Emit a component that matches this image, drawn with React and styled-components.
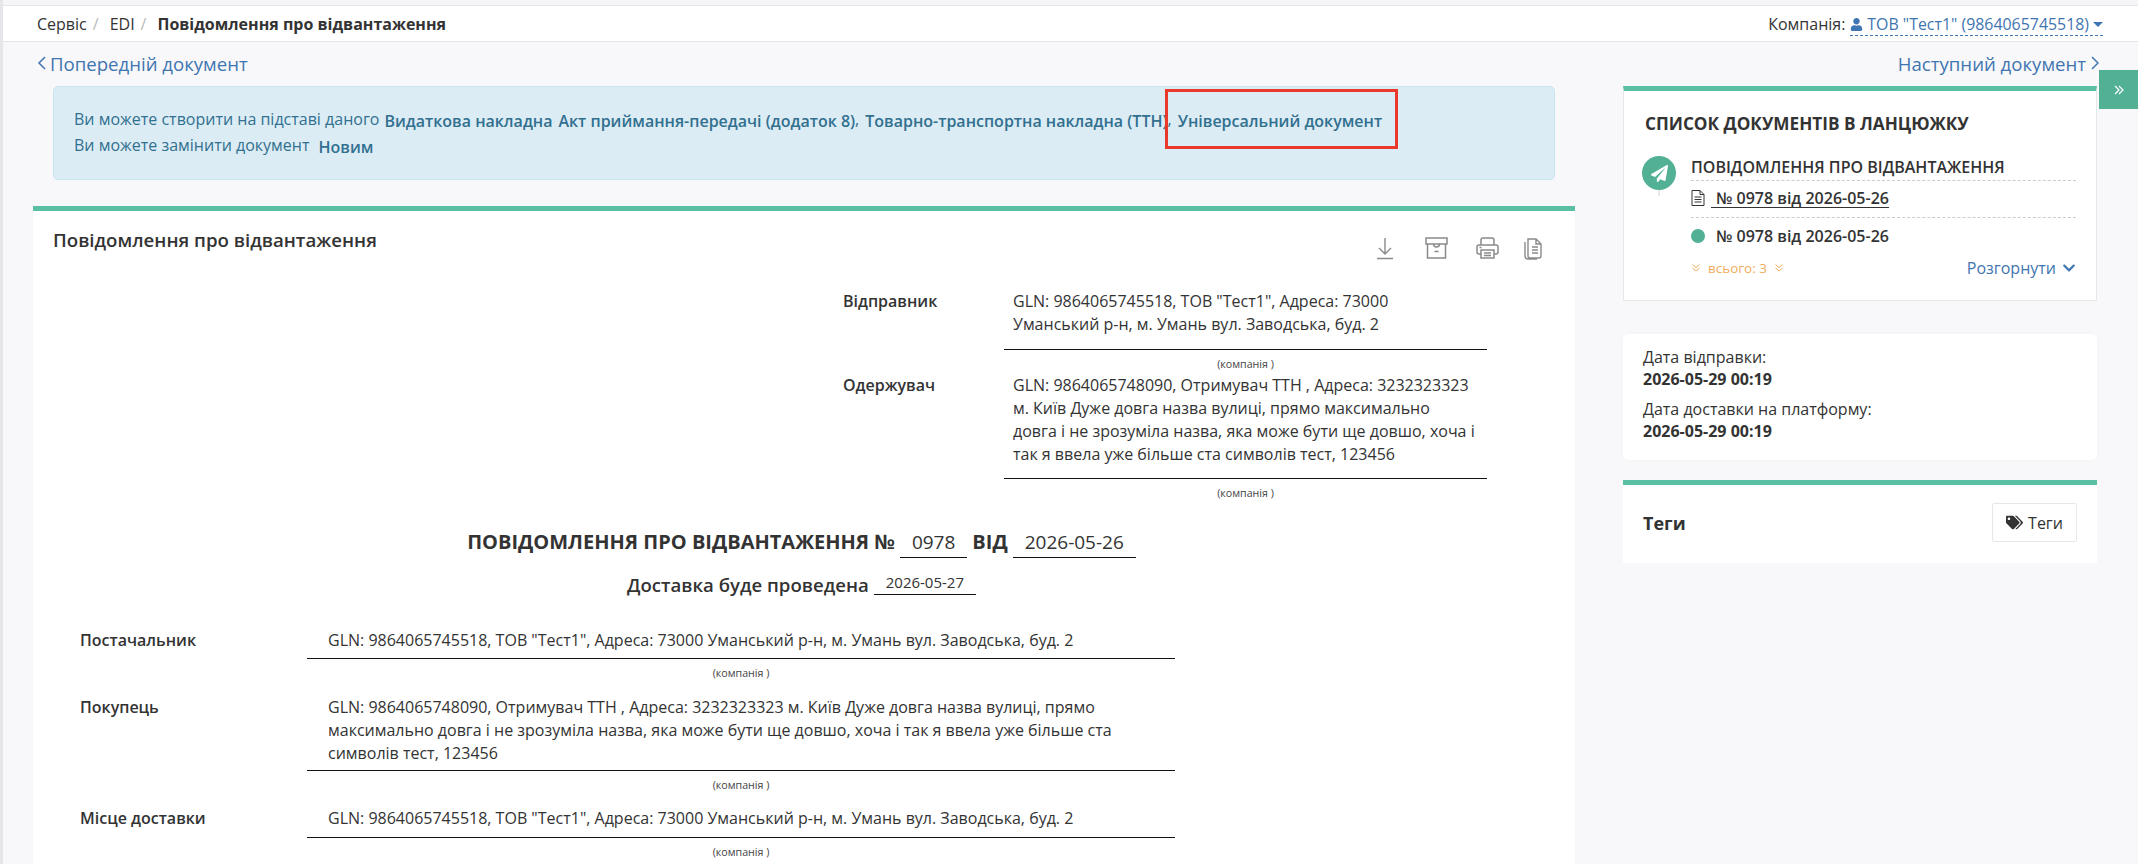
import React from 'react';
import styled, { createGlobalStyle } from 'styled-components';
import { FaChevronDown, FaPaperPlane, FaTags, FaUser } from 'react-icons/fa';

const GlobalStyle = createGlobalStyle`
  html, body {
    margin: 0;
    height: 864px;
    overflow: hidden;
    background: #f8f8fb;
  }
  body {
    font-family: "Open Sans", "Noto Sans", sans-serif;
    font-size: 16px;
    color: #333;
  }
`;

const Page = styled.div`
  position: relative;
  height: 864px;
  overflow: hidden;
  border-left: 3px solid #e6e6ea;
`;

const TopStrip = styled.div`
  height: 5px;
  background: #f6f6f9;
`;

const Breadcrumbs = styled.div`
  display: flex;
  align-items: center;
  justify-content: space-between;
  height: 35px;
  padding: 0 35px 0 34px;
  background: #fff;
  border-top: 1px solid #e6e6ea;
  border-bottom: 1px solid #e6e6ea;
`;

const Crumbs = styled.div`
  display: flex;
  align-items: center;
  .sep {
    margin: 0 11px 0 6px;
    color: #bbb;
  }
  b {
    font-weight: 700;
  }
`;

const Company = styled.div`
  display: flex;
  align-items: center;
  span.value {
    display: flex;
    align-items: center;
    gap: 4px;
    margin: 3px 0 0 5px;
    font-size: 15.9px;
    color: #3f75b0;
    border-bottom: 1px dashed #3f75b0;
    line-height: 21px;
  }
  i {
    width: 0;
    height: 0;
    border-left: 5px solid transparent;
    border-right: 5px solid transparent;
    border-top: 5px solid #3f75b0;
  }
`;

const Pager = styled.div`
  display: flex;
  justify-content: space-between;
  align-items: center;
  box-sizing: border-box;
  height: 44px;
  padding: 0 39px 2px 34px;
`;

const PagerLink = styled.a`
  display: flex;
  align-items: center;
  gap: 3px;
  font-size: 18.6px;
  color: #3f75b0;
`;

const Columns = styled.div`
  display: flex;
  align-items: flex-start;
  gap: 48px;
  padding-left: 30px;
`;

const MainColumn = styled.div`
  flex: none;
  width: 1542px;
`;

const SideColumn = styled.div`
  flex: none;
  width: 474px;
  display: flex;
  flex-direction: column;
`;

const Alert = styled.div`
  position: relative;
  box-sizing: border-box;
  width: 1502px;
  height: 94px;
  margin: 0 0 26px 20px;
  padding: 19px 20px 0;
  background: #dcecf5;
  border: 1px solid #c5e4ef;
  border-radius: 5px;
  color: #31708f;
`;

const AlertRow = styled.div`
  display: flex;
  align-items: center;
  height: 26px;
  white-space: pre;
  a {
    margin-left: ${(p) => p.$gap || 6}px;
    padding-top: 4px;
    font-weight: 600;
  }
  a:first-of-type {
    margin-left: ${(p) => p.$first}px;
  }
`;

const RedFrame = styled.div`
  position: absolute;
  left: 1111px;
  top: 2px;
  width: 233px;
  height: 60px;
  box-sizing: border-box;
  border: 3px solid #e8392a;
`;

const Card = styled.div`
  background: #fff;
  border-top: 5px solid #5bbfa3;
  box-sizing: border-box;
`;

const DocCard = styled(Card)`
  height: 660px;
  padding: 17px 20px 0;
`;

const DocHead = styled.div`
  display: flex;
  justify-content: space-between;
  align-items: flex-start;
  height: 62px;
  h2 {
    margin: 0;
    font-size: 18.67px;
    font-weight: 600;
    line-height: 24px;
  }
`;

const DocTools = styled.div`
  display: flex;
  gap: 28px;
  margin: 9px 13px 0 0;
  color: #8a8a8a;
  svg:first-child {
    margin-right: 4px;
  }
  svg:last-child {
    margin-left: -5px;
  }
`;

const Parties = styled.div`
  width: 644px;
  margin-left: 790px;
`;

const PartyRow = styled.div`
  display: grid;
  grid-template-columns: ${(p) => p.$label}px 1fr;
  line-height: 23px;
`;

const PartyLabel = styled.div`
  font-weight: 600;
`;

const PartyValue = styled.div`
  padding: 0 ${(p) => p.$right}px ${(p) => p.$bottom}px ${(p) => p.$left}px;
  border-bottom: 1px solid #111;
`;

const Hint = styled.div`
  height: ${(p) => p.$height}px;
  font-size: 10.67px;
  line-height: 28px;
  text-align: center;
  color: #444;
`;

const DocTitle = styled.div`
  display: flex;
  align-items: flex-end;
  justify-content: center;
  height: 34px;
  margin-top: 21px;
  font-size: 20px;
  font-weight: 700;
  line-height: 32px;
`;

const Filled = styled.span`
  margin: 0 ${(p) => p.$margin}px;
  padding: 0 ${(p) => p.$pad}px;
  border-bottom: 1px solid #111;
  font-size: ${(p) => p.$size}px;
  font-weight: 400;
  line-height: ${(p) => p.$line}px;
`;

const DocSubtitle = styled.div`
  display: flex;
  align-items: flex-end;
  justify-content: center;
  height: 27px;
  margin: 10px 0 34px;
  font-size: 18.6px;
  font-weight: 600;
  line-height: 20px;
`;

const Buyers = styled.div`
  width: 1095px;
  margin-left: 27px;
`;

const ChainCard = styled(Card)`
  height: 215px;
  padding: 21px 21px 0;
  border-left: 1px solid #e7e7e7;
  border-right: 1px solid #e7e7e7;
  border-bottom: 1px solid #e7e7e7;
  h3 {
    margin: 0;
    font-size: 17.2px;
    font-weight: 700;
    line-height: 24px;
  }
`;

const Chain = styled.div`
  display: grid;
  grid-template-columns: 34px 1fr;
  gap: 15px;
  margin: 20px 0 0 -3px;
`;

const Bubble = styled.div`
  position: relative;
  display: flex;
  align-items: center;
  justify-content: center;
  width: 34px;
  height: 34px;
  border-radius: 50%;
  background: #52b095;
  color: #fff;
  &:after {
    content: '';
    position: absolute;
    left: 16px;
    top: 34px;
    width: 2px;
    height: 6px;
    background: #e7e7e7;
  }
`;

const ChainBody = styled.div`
  width: 385px;
`;

const ChainHeading = styled.div`
  height: 24px;
  font-weight: 600;
  line-height: 22px;
  border-bottom: 1px dashed #ccc;
`;

const ChainRow = styled.div`
  display: flex;
  align-items: center;
  height: ${(p) => (p.$line ? 34 : 36)}px;
  padding-bottom: ${(p) => (p.$line ? 2 : 0)}px;
  font-size: 16px;
  font-weight: 600;
  border-bottom: ${(p) => (p.$line ? '1px dashed #ccc' : 'none')};
`;

const DocLink = styled.span`
  margin-left: 6px;
  padding-left: 5px;
  border-bottom: 1px solid #333;
  line-height: 18px;
`;

const Dot = styled.span`
  width: 14px;
  height: 14px;
  margin-right: 11px;
  border-radius: 50%;
  background: #52b095;
`;

const ChainFoot = styled.div`
  display: flex;
  align-items: center;
  justify-content: space-between;
  height: 26px;
  margin-top: 1px;
`;

const Total = styled.span`
  display: flex;
  align-items: center;
  gap: 7px;
  font-size: 13.5px;
  color: #f0ad5e;
`;

const Expand = styled.span`
  display: flex;
  align-items: center;
  gap: 6px;
  color: #3f75b0;
`;

const DatesCard = styled.div`
  box-sizing: border-box;
  height: 126px;
  margin: 33px 0 20px;
  padding: 12px 20px 0;
  background: #fff;
  border-radius: 5px;
  box-shadow: 0 0 5px rgba(0, 0, 0, 0.03);
  line-height: 22px;
  b {
    display: block;
    margin-bottom: 8px;
    font-weight: 700;
  }
`;

const TagsCard = styled(Card)`
  display: flex;
  align-items: center;
  justify-content: space-between;
  height: 83px;
  padding: 0 20px 3px;
  b {
    font-size: 18px;
    font-weight: 700;
  }
`;

const TagButton = styled.button`
  display: flex;
  align-items: center;
  justify-content: center;
  gap: 5px;
  width: 85px;
  height: 39px;
  padding: 0;
  background: #fff;
  border: 1px solid #e7e7e7;
  border-radius: 2px;
  font: inherit;
  color: #333;
`;

const RailTab = styled.div`
  position: absolute;
  right: 0;
  top: 70px;
  display: flex;
  align-items: center;
  justify-content: center;
  width: 39px;
  height: 39px;
  background: #52b095;
  color: #fff;
`;

const Chevron = ({ dir }) => (
  <svg width="10" height="16" viewBox="0 0 10 16" fill="none" stroke="currentColor" strokeWidth="1.5">
    <path d={dir === 'left' ? 'M8 2 2 8l6 6' : 'M3 2l6 6-6 6'} />
  </svg>
);

const DoubleAngle = ({ size = 10 }) => (
  <svg width={size} height={size} viewBox="0 0 10 10" fill="none" stroke="currentColor" strokeWidth="1">
    <path d="M1.5 1.5 5 4.5l3.5-3M1.5 5 5 8l3.5-3" />
  </svg>
);

const RailIcon = () => (
  <svg width="12" height="12" viewBox="0 0 12 12" fill="none" stroke="currentColor" strokeWidth="1.2">
    <path d="M2 2l4 4-4 4M6 2l4 4-4 4" />
  </svg>
);

const DownloadIcon = () => (
  <svg width="16" height="23" viewBox="0 0 16 23" fill="none" stroke="currentColor" strokeWidth="1.4">
    <path d="M8 1v15M2 11l6 6 6-6M0 21.5h16" />
  </svg>
);

const ArchiveIcon = () => (
  <svg width="23" height="22" viewBox="0 0 23 22" fill="none" stroke="currentColor" strokeWidth="1.5">
    <path d="M1 1h21v6H1zM2.5 7v14h18V7M8.5 7c0 4 6 4 6 0M9.5 14.5h4" />
  </svg>
);

const PrintIcon = () => (
  <svg width="23" height="22" viewBox="0 0 23 22" fill="none" stroke="currentColor" strokeWidth="1.5">
    <path d="M5 8V3a2 2 0 0 1 2-2h9a2 2 0 0 1 2 2v5M5 17H3a2 2 0 0 1-2-2v-5a2 2 0 0 1 2-2h17a2 2 0 0 1 2 2v5a2 2 0 0 1-2 2h-2M5 13h13v8H5zM8 16h7M8 18.5h7M3.5 10.5h2" />
  </svg>
);

const CopyIcon = () => (
  <svg width="20" height="23" viewBox="0 0 20 23" fill="none" stroke="currentColor" strokeWidth="1.4">
    <path d="M6 2h8l5 5v12a2 2 0 0 1-2 2H8a2 2 0 0 1-2-2zM14 2v5h5M3 5v14a3 3 0 0 0 3 3h9M10 10h6M10 13h6M10 16h6" />
  </svg>
);

const FileIcon = () => (
  <svg width="14" height="16" viewBox="0 0 14 16" fill="none" stroke="#333" strokeWidth="1">
    <path d="M1 .5h8l4 4v11H1zM9 .5v4h4M3.5 7h7M3.5 9.5h7M3.5 12h7" />
  </svg>
);

const Party = ({ name, label, left, right = 0, bottom, labelWidth, hint }) => (
  <>
    <PartyRow $label={labelWidth}>
      <PartyLabel>{label}</PartyLabel>
      <PartyValue $left={left} $right={right} $bottom={bottom}>{name}</PartyValue>
    </PartyRow>
    <PartyRow $label={labelWidth}>
      <span />
      <Hint $height={hint}>(компанія )</Hint>
    </PartyRow>
  </>
);

const SENDER = 'GLN: 9864065745518, ТОВ "Тест1", Адреса: 73000 Уманський р-н, м. Умань вул. Заводська, буд. 2';
const RECEIVER = 'GLN: 9864065748090, Отримувач ТТН , Адреса: 3232323323 м. Київ Дуже довга назва вулиці, прямо максимально довга і не зрозуміла назва, яка може бути ще довшо, хоча і так я ввела уже більше ста символів тест, 123456';

export default function App() {
  return (
    <Page>
      <GlobalStyle />
      <TopStrip />
      <Breadcrumbs>
        <Crumbs>
          Сервіс<span className="sep">/</span>EDI<span className="sep">/</span>
          <b>Повідомлення про відвантаження</b>
        </Crumbs>
        <Company>
          Компанія:
          <span className="value">
            <FaUser size={13} /> ТОВ "Тест1" (9864065745518) <i />
          </span>
        </Company>
      </Breadcrumbs>
      <Pager>
        <PagerLink><Chevron dir="left" />Попередній документ</PagerLink>
        <PagerLink>Наступний документ<Chevron dir="right" /></PagerLink>
      </Pager>
      <RailTab><RailIcon /></RailTab>
      <Columns>
        <MainColumn>
          <Alert>
            <AlertRow $first={5}>
              Ви можете створити на підставі даного
              <a>Видаткова накладна</a>
              <a>Акт приймання-передачі (додаток 8)</a>,
              <a>Товарно-транспортна накладна (ТТН)</a>,
              <a>Універсальний документ</a>
            </AlertRow>
            <AlertRow $first={9}>
              Ви можете замінити документ
              <a>Новим</a>
            </AlertRow>
            <RedFrame />
          </Alert>
          <DocCard>
            <DocHead>
              <h2>Повідомлення про відвантаження</h2>
              <DocTools>
                <DownloadIcon />
                <ArchiveIcon />
                <PrintIcon />
                <CopyIcon />
              </DocTools>
            </DocHead>
            <Parties>
              <Party label="Відправник" name={SENDER} labelWidth={161} left={9} right={10} bottom={13} hint={24} />
              <Party label="Одержувач" name={RECEIVER} labelWidth={161} left={9} right={10} bottom={12} hint={24} />
            </Parties>
            <DocTitle>
              ПОВІДОМЛЕННЯ ПРО ВІДВАНТАЖЕННЯ №
              <Filled $margin={5} $pad={12} $size={19} $line={30}>0978</Filled>
              ВІД
              <Filled $margin={5} $pad={12} $size={19} $line={30}>2026-05-26</Filled>
            </DocTitle>
            <DocSubtitle>
              Доставка буде проведена
              <Filled $margin={5} $pad={12} $size={15} $line={24}>2026-05-27</Filled>
            </DocSubtitle>
            <Buyers>
              <Party label="Постачальник" name={SENDER} labelWidth={227} left={21} bottom={6} hint={37} />
              <Party label="Покупець" name={RECEIVER} labelWidth={227} left={21} bottom={5} hint={36} />
              <Party label="Місце доставки" name={SENDER} labelWidth={227} left={21} bottom={7} hint={37} />
            </Buyers>
          </DocCard>
        </MainColumn>
        <SideColumn>
          <ChainCard>
            <h3>СПИСОК ДОКУМЕНТІВ В ЛАНЦЮЖКУ</h3>
            <Chain>
              <Bubble><FaPaperPlane size={17} /></Bubble>
              <ChainBody>
                <ChainHeading>ПОВІДОМЛЕННЯ ПРО ВІДВАНТАЖЕННЯ</ChainHeading>
                <ChainRow $line>
                  <FileIcon />
                  <DocLink>№ 0978 від 2026-05-26</DocLink>
                </ChainRow>
                <ChainRow>
                  <Dot />№ 0978 від 2026-05-26
                </ChainRow>
                <ChainFoot>
                  <Total>
                    <DoubleAngle />всього: 3<DoubleAngle />
                  </Total>
                  <Expand>Розгорнути <FaChevronDown size={14} /></Expand>
                </ChainFoot>
              </ChainBody>
            </Chain>
          </ChainCard>
          <DatesCard>
            Дата відправки:
            <b>2026-05-29 00:19</b>
            Дата доставки на платформу:
            <b>2026-05-29 00:19</b>
          </DatesCard>
          <TagsCard>
            <b>Теги</b>
            <TagButton><FaTags size={17} /> Теги</TagButton>
          </TagsCard>
        </SideColumn>
      </Columns>
    </Page>
  );
}
